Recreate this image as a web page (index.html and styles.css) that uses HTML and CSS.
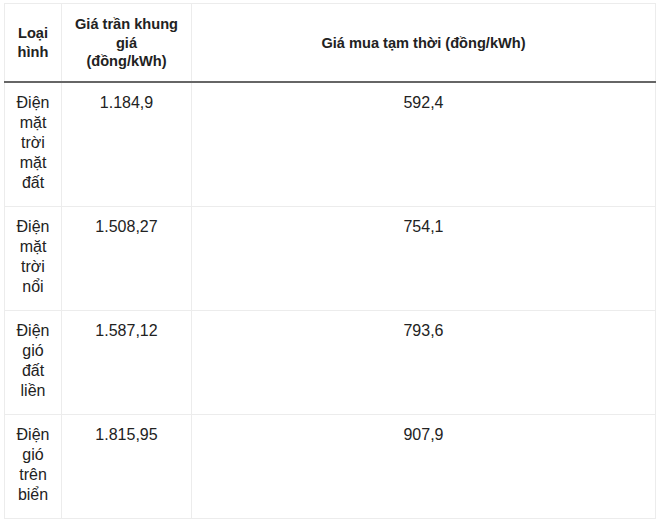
FILE: index.html
```html
<!DOCTYPE html>
<html lang="vi">
<head>
<meta charset="utf-8">
<link rel="stylesheet" href="styles.css">
</head>
<body>
<table class="price-table">
  <colgroup>
    <col class="col-type">
    <col class="col-cap">
    <col class="col-temp">
  </colgroup>
  <thead>
    <tr>
      <th>Loại hình</th>
      <th>Giá trần khung giá<br>(đồng/kWh)</th>
      <th>Giá mua tạm thời (đồng/kWh)</th>
    </tr>
  </thead>
  <tbody>
    <tr>
      <td>Điện mặt trời mặt đất</td>
      <td>1.184,9</td>
      <td>592,4</td>
    </tr>
    <tr>
      <td>Điện mặt trời nổi</td>
      <td>1.508,27</td>
      <td>754,1</td>
    </tr>
    <tr>
      <td>Điện gió đất liền</td>
      <td>1.587,12</td>
      <td>793,6</td>
    </tr>
    <tr>
      <td>Điện gió trên biển</td>
      <td>1.815,95</td>
      <td>907,9</td>
    </tr>
  </tbody>
</table>
</body>
</html>
```

FILE: styles.css
```css
html, body {
  margin: 0;
  padding: 0;
  background: #fff;
}

body {
  padding: 3px 0 0 4px;
  font-family: "Liberation Sans", Arial, sans-serif;
  color: #222;
}

.price-table {
  border-collapse: collapse;
  width: 652px;
  table-layout: fixed;
  border: 1px solid #e6e6e6;
}

.col-type { width: 57px; }
.col-cap { width: 130px; }

.price-table th,
.price-table td {
  border: 1px solid #ececec;
  text-align: center;
}

.price-table th {
  font-size: 14.6px;
  line-height: 18.5px;
  font-weight: bold;
  padding: 11px 6px 10px;
  vertical-align: middle;
  border-bottom: 2px solid #666;
}

.price-table td {
  font-size: 16px;
  line-height: 20px;
  padding: 10px 6px 13px;
  vertical-align: top;
}
```
